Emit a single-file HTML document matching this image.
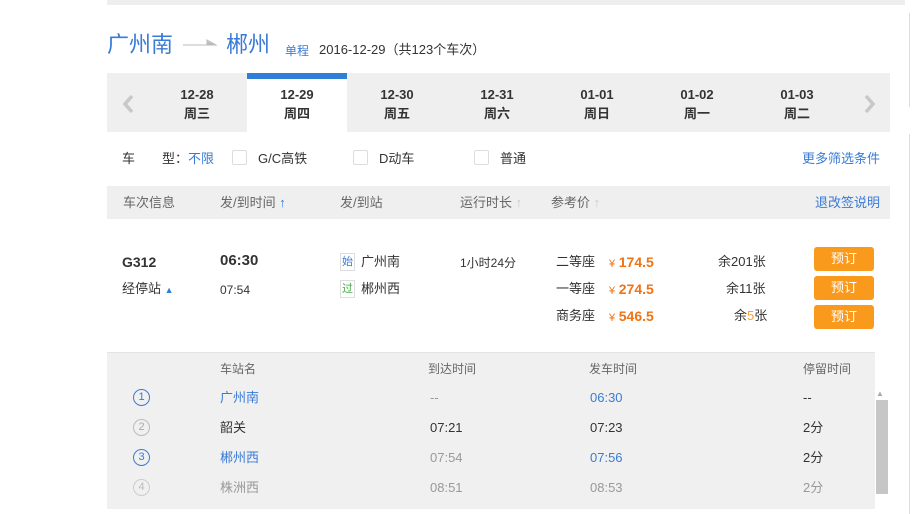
<!DOCTYPE html><html><head><meta charset="utf-8"><style>
*{margin:0;padding:0;box-sizing:border-box}
body{width:912px;height:509px;background:#fff;position:relative;overflow:hidden;font-family:"Liberation Sans","Noto Sans CJK SC",sans-serif;color:#333;font-size:13px;line-height:16px}
.a{position:absolute;white-space:nowrap}
.blue{color:#3a7bd5}
.tab{position:absolute;top:73px;width:100px;height:59px;text-align:center;font-weight:bold;font-size:13px;color:#333;padding-top:12px;line-height:19px}
.btn{position:absolute;left:814px;width:60px;height:24px;background:#fa9a1d;color:#fff;border-radius:3px;text-align:center;line-height:24px;font-size:13px}
.price{color:#f07314;font-weight:bold;font-size:14px}
.cb{position:absolute;top:150px;width:15px;height:15px;border:1px solid #ddd;border-radius:2px;background:#fff}
.g{color:#999}
</style></head><body>
<div class="a" style="left:107px;top:0;width:798px;height:5px;background:#eee"></div>
<div class="a" style="left:909px;top:13px;width:3px;height:94px;border-left:1px solid #ddd"></div>
<div class="a" style="left:909px;top:134px;width:3px;height:380px;border-left:1px solid #ddd"></div>

<div class="a blue" style="left:107px;top:32px;font-size:22px;line-height:26px">广州南</div>
<svg class="a" style="left:182px;top:38px" width="36" height="10"><path d="M1 7H34L25 2V7" fill="none" stroke="#bbb" stroke-width="1"/><path d="M25 3L34 7H25Z" fill="#bbb"/></svg>
<div class="a blue" style="left:226px;top:32px;font-size:22px;line-height:26px">郴州</div>
<div class="a blue" style="left:285px;top:43px;font-size:12px">单程</div>
<div class="a" style="left:319px;top:42px;font-size:13px;color:#333">2016-12-29（共123个车次）</div>

<div class="a" style="left:107px;top:73px;width:783px;height:59px;background:#efefef"></div>
<svg class="a" style="left:121px;top:94px" width="14" height="20"><path d="M11 2L4 10L11 18" fill="none" stroke="#c8c8c8" stroke-width="3.5"/></svg>
<svg class="a" style="left:863px;top:94px" width="14" height="20"><path d="M3 2L10 10L3 18" fill="none" stroke="#c8c8c8" stroke-width="3.5"/></svg>
<div class="tab" style="left:147px">12-28<br>周三</div>
<div class="tab" style="left:247px;background:#fff;border-top:6px solid #2f7fd8;padding-top:6px">12-29<br>周四</div>
<div class="tab" style="left:347px">12-30<br>周五</div>
<div class="tab" style="left:447px">12-31<br>周六</div>
<div class="tab" style="left:547px">01-01<br>周日</div>
<div class="tab" style="left:647px">01-02<br>周一</div>
<div class="tab" style="left:747px">01-03<br>周二</div>

<div class="a" style="left:122px;top:151px">车</div>
<div class="a" style="left:162px;top:151px">型：<span class="blue">不限</span></div>
<div class="cb" style="left:232px"></div><div class="a" style="left:258px;top:151px">G/C高铁</div>
<div class="cb" style="left:353px"></div><div class="a" style="left:379px;top:151px">D动车</div>
<div class="cb" style="left:474px"></div><div class="a" style="left:500px;top:151px">普通</div>
<div class="a blue" style="left:802px;top:151px">更多筛选条件</div>

<div class="a" style="left:107px;top:186px;width:783px;height:33px;background:#efefef"></div>
<div class="a" style="left:123px;top:195px;color:#666">车次信息</div>
<div class="a" style="left:220px;top:195px;color:#666">发/到时间 <span style="color:#2f7fd8">&#x2191;</span></div>
<div class="a" style="left:340px;top:195px;color:#666">发/到站</div>
<div class="a" style="left:460px;top:195px;color:#666">运行时长 <span style="color:#ccc">&#x2191;</span></div>
<div class="a" style="left:551px;top:195px;color:#666">参考价 <span style="color:#ccc">&#x2191;</span></div>
<div class="a blue" style="left:815px;top:195px">退改签说明</div>

<div class="a" style="left:122px;top:254px;font-weight:bold;font-size:14px">G312</div>
<div class="a" style="left:122px;top:281px">经停站 <span style="color:#2f7fd8;font-size:9px">&#9650;</span></div>
<div class="a" style="left:220px;top:253px;font-weight:bold;font-size:15px">06:30</div>
<div class="a" style="left:220px;top:282px;font-size:12px">07:54</div>
<div class="a" style="left:340px;top:253px;border:1px solid #ddd;font-size:11px;color:#3a7bd5;padding:0 1px">始</div>
<div class="a" style="left:361px;top:254px">广州南</div>
<div class="a" style="left:340px;top:280px;border:1px solid #ddd;font-size:11px;color:#4a4;padding:0 1px">过</div>
<div class="a" style="left:361px;top:281px">郴州西</div>
<div class="a" style="left:460px;top:255px;font-size:12px">1小时24分</div>
<div class="a" style="left:556px;top:254px">二等座</div><div class="a" style="left:609px;top:254px"><span style="color:#f07314;font-size:11px">¥</span> <span class="price">174.5</span></div><div class="a" style="left:718px;top:254px">余201张</div>
<div class="a" style="left:556px;top:281px">一等座</div><div class="a" style="left:609px;top:281px"><span style="color:#f07314;font-size:11px">¥</span> <span class="price">274.5</span></div><div class="a" style="left:726px;top:281px">余11张</div>
<div class="a" style="left:556px;top:308px">商务座</div><div class="a" style="left:609px;top:308px"><span style="color:#f07314;font-size:11px">¥</span> <span class="price">546.5</span></div><div class="a" style="left:734px;top:308px">余<span style="color:#f0a040">5</span>张</div>
<div class="btn" style="top:247px">预订</div>
<div class="btn" style="top:276px">预订</div>
<div class="btn" style="top:305px">预订</div>

<div class="a" style="left:107px;top:352px;width:768px;height:157px;background:#f0f0f0;border-top:1px solid #e4e4e4"></div>
<div class="a" style="left:876px;top:386px;font-size:8px;color:#aaa">&#9650;</div>
<div class="a" style="left:876px;top:400px;width:12px;height:94px;background:#c6c6c6"></div>
<div class="a" style="left:220px;top:361px;font-size:12px;color:#666">车站名</div>
<div class="a" style="left:428px;top:361px;font-size:12px;color:#666">到达时间</div>
<div class="a" style="left:589px;top:361px;font-size:12px;color:#666">发车时间</div>
<div class="a" style="left:803px;top:361px;font-size:12px;color:#666">停留时间</div>

<div class="a" style="left:133px;top:389px;width:17px;height:17px;border:1px solid #3a7bd5;border-radius:50%;color:#3a7bd5;font-size:11px;text-align:center;line-height:15px">1</div>
<div class="a blue" style="left:220px;top:390px">广州南</div><div class="a g" style="left:430px;top:390px">--</div><div class="a blue" style="left:590px;top:390px">06:30</div><div class="a" style="left:803px;top:390px">--</div>
<div class="a" style="left:133px;top:419px;width:17px;height:17px;border:1px solid #bbb;border-radius:50%;color:#aaa;font-size:11px;text-align:center;line-height:15px">2</div>
<div class="a" style="left:220px;top:420px">韶关</div><div class="a" style="left:430px;top:420px">07:21</div><div class="a" style="left:590px;top:420px">07:23</div><div class="a" style="left:803px;top:420px">2分</div>
<div class="a" style="left:133px;top:449px;width:17px;height:17px;border:1px solid #3a7bd5;border-radius:50%;color:#3a7bd5;font-size:11px;text-align:center;line-height:15px">3</div>
<div class="a blue" style="left:220px;top:450px">郴州西</div><div class="a g" style="left:430px;top:450px">07:54</div><div class="a blue" style="left:590px;top:450px">07:56</div><div class="a" style="left:803px;top:450px">2分</div>
<div class="a" style="left:133px;top:479px;width:17px;height:17px;border:1px solid #ccc;border-radius:50%;color:#bbb;font-size:11px;text-align:center;line-height:15px">4</div>
<div class="a g" style="left:220px;top:480px">株洲西</div><div class="a g" style="left:430px;top:480px">08:51</div><div class="a g" style="left:590px;top:480px">08:53</div><div class="a g" style="left:803px;top:480px">2分</div>
</body></html>
